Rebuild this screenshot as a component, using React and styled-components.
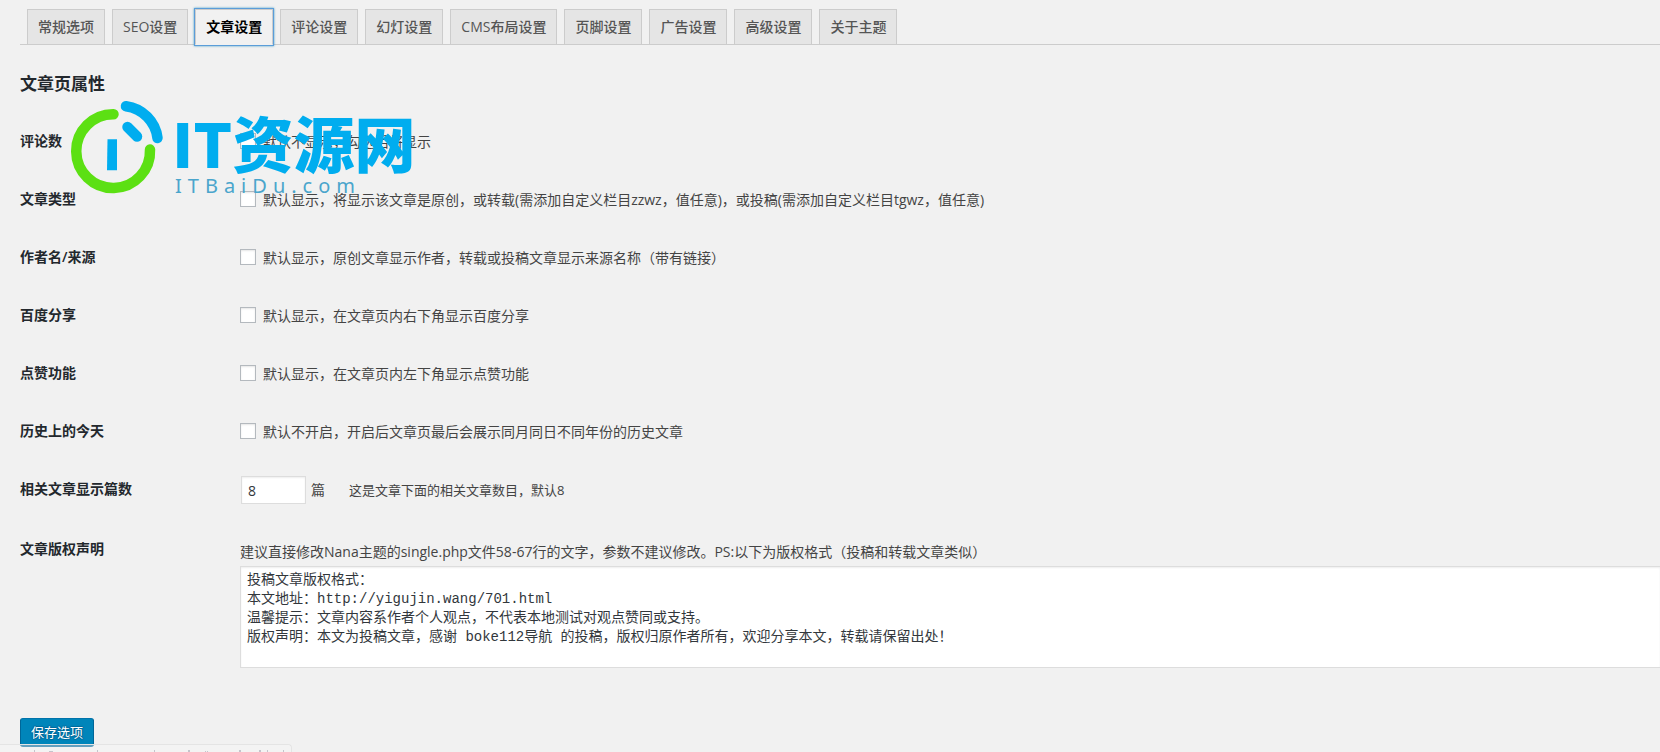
import { useState } from "react";
import styled, { createGlobalStyle } from "styled-components";

const tabs = [
    "常规选项",
    "SEO设置",
    "文章设置",
    "评论设置",
    "幻灯设置",
    "CMS布局设置",
    "页脚设置",
    "广告设置",
    "高级设置",
    "关于主题",
];

const switches = [
    { id: "comments", label: "评论数", text: "默认不显示，勾选后将显示" },
    { id: "type", label: "文章类型", text: "默认显示，将显示该文章是原创，或转载(需添加自定义栏目zzwz，值任意)，或投稿(需添加自定义栏目tgwz，值任意)" },
    { id: "author", label: "作者名/来源", text: "默认显示，原创文章显示作者，转载或投稿文章显示来源名称（带有链接）" },
    { id: "share", label: "百度分享", text: "默认显示，在文章页内右下角显示百度分享" },
    { id: "like", label: "点赞功能", text: "默认显示，在文章页内左下角显示点赞功能" },
    { id: "history", label: "历史上的今天", text: "默认不开启，开启后文章页最后会展示同月同日不同年份的历史文章" },
];

const defaultCopyright = `投稿文章版权格式：
本文地址：http://yigujin.wang/701.html
温馨提示：文章内容系作者个人观点，不代表本地测试对观点赞同或支持。
版权声明：本文为投稿文章，感谢 boke112导航 的投稿，版权归原作者所有，欢迎分享本文，转载请保留出处！`;

export default function App() {

    const [activeTab, setActiveTab] = useState("文章设置");
    const [related, setRelated] = useState("8");
    const [copyright, setCopyright] = useState(defaultCopyright);

    return (
        <>
            <GlobalStyle />
            <Page>
                <TabBar>
                    {tabs.map((tab) =>
                        <Tab key={tab} href="#" $active={tab === activeTab} onClick={() => setActiveTab(tab)}>
                            {tab}
                        </Tab>
                    )}
                </TabBar>

                <form onSubmit={(e) => e.preventDefault()}>
                    <Title>文章页属性</Title>

                    {switches.map((item) =>
                        <Row key={item.id}>
                            <RowName htmlFor={item.id}>{item.label}</RowName>
                            <Field>
                                <CheckBox type="checkbox" id={item.id} />
                                <CheckText htmlFor={item.id}>{item.text}</CheckText>
                            </Field>
                        </Row>
                    )}

                    <Row>
                        <RowName htmlFor="related">相关文章显示篇数</RowName>
                        <Field>
                            <NumberBox id="related" type="text" value={related} onChange={(e) => setRelated(e.target.value)} />
                            <Unit>篇</Unit>
                            <Note>这是文章下面的相关文章数目，默认8</Note>
                        </Field>
                    </Row>

                    <Row>
                        <RowName htmlFor="copyright">文章版权声明</RowName>
                        <WideField>
                            <Hint>建议直接修改Nana主题的single.php文件58-67行的文字，参数不建议修改。PS:以下为版权格式（投稿和转载文章类似）</Hint>
                            <CopyrightBox id="copyright" value={copyright} onChange={(e) => setCopyright(e.target.value)} />
                        </WideField>
                    </Row>

                    <SaveButton type="submit">保存选项</SaveButton>
                </form>
            </Page>

            <Watermark>
                <svg width="94" height="94" viewBox="70 100 94 94" fill="none" strokeWidth="10.5" strokeLinecap="round">
                    <path d="M113.500 114.200A36.900 36.900 0 1 0 150 149.500" stroke="#5ce013" />
                    <path d="M126 106.200A36.500 36.500 0 0 1 157.500 138" stroke="#00adef" />
                    <path d="M127.500 127L137 136.500" stroke="#00adef" />
                    <path d="M107.500 139.300H117V170.300H107Z" fill="#00adef" />
                </svg>
                <Brand>
                    <BrandName>IT资源网</BrandName>
                    <BrandUrl>ITBaiDu.com</BrandUrl>
                </Brand>
            </Watermark>

            <StatusBar>
                <svg width="290" height="2" viewBox="0 0 290 2" fill="#c4c4cc">
                    <path d="M34 0h1v2h-1zM49 1h4v1h-4zM97 0h1v2h-1zM154 0h1v2h-1zM188 0h2v2h-2zM205 1h1v1h-1zM207 1h1v1h-1zM239 0h2v2h-2zM259 0h2v2h-2zM267 0h1v2h-1zM283 0h1v2h-1z" />
                </svg>
            </StatusBar>
        </>
    );
}

const GlobalStyle = createGlobalStyle`
    * {
        box-sizing: border-box;
    }

    body {
        margin: 0;
        height: 100vh;
        overflow: hidden;
        background: #f1f1f1;
        color: #444;
        font-family: "Open Sans", "Noto Sans CJK SC", sans-serif;
        font-size: 14px;
        line-height: 18px;
    }
`

const Page = styled.div`
    padding: 9px 0 0 20px;
`

const TabBar = styled.nav`
    display: flex;
    gap: 7px;
    height: 36px;
    padding-left: 7px;
    border-bottom: 1px solid #ccc;
`

const Tab = styled.a`
    height: ${(props) => props.$active ? "36px" : "35px"};
    padding: 5px 10px;
    border: 1px solid #ccc;
    border-bottom: ${(props) => props.$active ? "1px solid #f1f1f1" : "none"};
    background: ${(props) => props.$active ? "#f1f1f1" : "#e5e5e5"};
    box-shadow: ${(props) => props.$active ? "0 0 0 1px #5b9dd9, 0 0 2px 1px rgba(30, 140, 190, 0.8)" : "none"};
    color: ${(props) => props.$active ? "#000" : "#555"};
    font-weight: ${(props) => props.$active ? 600 : 500};
    line-height: 24px;
    text-decoration: none;
    white-space: nowrap;
`

const Title = styled.h2`
    margin: 27px 0 16px;
    color: #23282d;
    font-size: 17px;
    font-weight: 600;
    line-height: 24px;
`

const Row = styled.div`
    display: grid;
    grid-template-columns: 220px 1fr;
`

const RowName = styled.label`
    padding: 20px 10px 20px 0;
    color: #23282d;
    font-weight: 600;
`

const Field = styled.div`
    display: flex;
    align-items: center;
    padding: 15px 0;
    white-space: nowrap;
`

const WideField = styled.div`
    padding: 15px 0 20px;
`

const CheckBox = styled.input`
    appearance: none;
    width: 16px;
    height: 16px;
    margin: 0 7px 0 0;
    border: 1px solid #b4b9be;
    background: #fff;
    box-shadow: inset 0 1px 2px rgba(0, 0, 0, 0.1);

    &:checked {
        background: #1e8cbe;
    }
`

const CheckText = styled.label`
    padding-top: 2px;
`

const NumberBox = styled.input`
    width: 65px;
    height: 28px;
    margin: 1px 5px 1px 1px;
    padding: 3px 6px;
    border: 1px solid #ddd;
    background: #fff;
    box-shadow: inset 0 1px 2px rgba(0, 0, 0, 0.07);
    color: #32373c;
    font-family: inherit;
    font-size: 14px;
`

const Unit = styled.span`
    margin-right: 24px;
`

const Note = styled.span`
    font-size: 13px;
`

const Hint = styled.p`
    margin: 4px 0 1px;
    line-height: 26px;
`

const CopyrightBox = styled.textarea`
    display: block;
    width: 100%;
    height: 102px;
    padding: 4px 6px;
    border: 1px solid #ddd;
    border-right: none;
    background: #fff;
    box-shadow: inset 0 1px 2px rgba(0, 0, 0, 0.07);
    color: #32373c;
    font-family: "Liberation Mono", "Noto Sans CJK SC", monospace;
    font-size: 14px;
    line-height: 19px;
    resize: none;
`

const SaveButton = styled.button`
    height: 28px;
    margin-top: 30px;
    padding: 0 10px;
    border: 1px solid #006799;
    border-top-color: #0073aa;
    border-radius: 3px;
    background: #0085ba;
    box-shadow: 0 1px 0 #006799;
    color: #fff;
    font-family: inherit;
    font-size: 13px;
    line-height: 26px;
    text-shadow: 0 -1px 1px #006799, 1px 0 1px #006799, 0 1px 1px #006799, -1px 0 1px #006799;
    cursor: pointer;
`

/* site logo laid over the form */
const Watermark = styled.div`
    position: absolute;
    top: 100px;
    left: 70px;
    display: flex;
    gap: 8px;
    pointer-events: none;
`

const Brand = styled.div`
    display: flex;
    flex-direction: column;
    padding-top: 12px;
    white-space: nowrap;
`

const BrandName = styled.span`
    color: #00adef;
    font-family: "Noto Sans CJK SC", sans-serif;
    font-size: 61px;
    font-weight: 900;
    line-height: 60px;
`

const BrandUrl = styled.span`
    padding: 2px 0 0 3px;
    color: #4aa5cc;
    font-family: "Noto Sans", sans-serif;
    font-size: 20px;
    letter-spacing: 6px;
    line-height: 24px;
`

const StatusBar = styled.div`
    position: fixed;
    bottom: 0;
    left: 0;
    display: flex;
    align-items: flex-end;
    width: 292px;
    height: 8px;
    border: 1px solid #e4e4e4;
    border-width: 1px 1px 0 0;
    border-radius: 0 4px 0 0;
    background: rgba(247, 247, 247, 0.4);
`
